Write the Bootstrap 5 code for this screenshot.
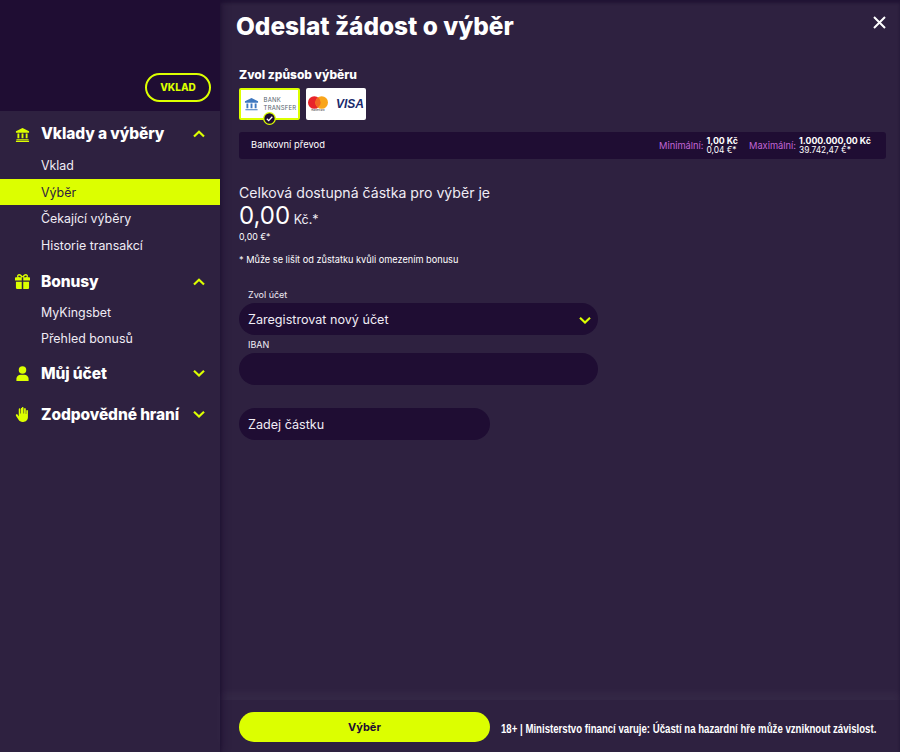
<!DOCTYPE html>
<html lang="cs">

<head>
    <meta charset="UTF-8">
    <meta name="viewport" content="width=device-width, initial-scale=1.0">
    <title>Odeslat žádost o výběr</title>
    <link href="https://cdn.jsdelivr.net/npm/bootstrap@5.3.2/dist/css/bootstrap.min.css" rel="stylesheet">
    <style>
        body {
            font-family: Inter, "Noto Sans", sans-serif;
            background-color: #2e2140;
            color: #fff;
            height: 752px;
            overflow: hidden;
        }

        .sidebar {
            width: 220px;
            flex-shrink: 0;
            box-shadow: 2px 0 8px rgba(20, 5, 40, .45);
            z-index: 1;
        }

        .side-top {
            height: 111px;
            background-color: #1f0d33;
            padding: 73px 9px 0 0;
        }

        .btn-vklad {
            width: 66px;
            height: 29px;
            padding: 0;
            font-size: 10px;
            font-weight: 800;
            color: #dcff00;
            border: 2px solid #dcff00;
            border-radius: 15px;
            line-height: 25px;
        }

        .menu-head {
            height: 22px;
            padding: 0 15px;
            font-size: 15.5px;
            font-weight: 800;
            letter-spacing: -.1px;
            margin-top: 12px;
        }

        .menu-head.tight {
            margin-top: 10px;
        }

        .menu-head.wide {
            margin-top: 19px;
        }

        .menu-icon {
            width: 15px;
            height: 15px;
            margin-right: 11px;
            fill: #dcff00;
            flex-shrink: 0;
        }

        .chev {
            width: 12px;
            height: 8px;
            fill: none;
            stroke: #dcff00;
            stroke-width: 2.2;
            flex-shrink: 0;
        }

        .menu-links {
            padding-top: 6px;
        }

        .menu-links.first {
            padding-top: 7px;
        }

        .menu-link {
            display: block;
            height: 26.7px;
            line-height: 26.7px;
            padding: 1px 0 0 41px;
            font-size: 12.4px;
            color: #f0ecf5;
        }

        .menu-link.active {
            background-color: #dcff00;
            color: #2e2140;
        }

        .main {
            width: 680px;
            min-width: 0;
            padding: 0 14px 0 19px;
            box-shadow: inset 0 3px 3px rgba(20, 5, 40, .5);
        }

        .main h1 {
            font-size: 24.4px;
            font-weight: 800;
            line-height: 28px;
            margin: 12px 0 0 -3px;
        }

        .close-x {
            position: absolute;
            top: 16px;
            right: 14px;
            width: 13px;
            height: 13px;
            stroke: #fff;
            stroke-width: 2;
        }

        .method-title {
            font-size: 12px;
            font-weight: 800;
            line-height: 16px;
            margin: 27px 0 5px;
        }

        .tiles {
            gap: 6px;
        }

        .tile {
            width: 60px;
            height: 32px;
            background-color: #fff;
            border-radius: 2px;
            color: #555f6e;
        }

        .tile.selected {
            width: 61px;
            border: 2px solid #dcff00;
        }

        .tile-check {
            position: absolute;
            left: 50%;
            bottom: -7px;
            width: 13px;
            height: 13px;
            margin-left: -6.5px;
        }

        .bank-text {
            font-size: 6px;
            line-height: 8px;
            letter-spacing: .2px;
        }

        .visa {
            font-family: "Liberation Sans", sans-serif;
            font-size: 12px;
            font-style: italic;
            font-weight: 700;
            color: #1a2a6c;
        }

        .mc-label {
            font-size: 2.5px;
            line-height: 3px;
            color: #333;
        }

        .limit-bar {
            height: 27px;
            margin-top: 12px;
            padding: 0 15px 0 12px;
            background-color: #1f0d33;
            border-radius: 3px;
            font-size: 9.4px;
        }

        .limit-label {
            font-size: 9.3px;
            color: #c265d6;
            margin-right: 3px;
        }

        .limit-val {
            line-height: 8.5px;
            font-size: 8.4px;
        }

        .limit-val b {
            display: block;
            font-weight: 700;
            font-size: 8.8px;
        }

        .limit-val.first {
            margin-right: 11px;
        }

        .avail-title {
            font-size: 14.1px;
            line-height: 20px;
            margin-top: 24px;
            color: #f0ecf5;
        }

        .avail-num {
            font-size: 24px;
            line-height: 30px;
            margin-top: -2px;
        }

        .avail-num small {
            font-size: 12.5px;
            color: #f0ecf5;
        }

        .avail-eur {
            font-size: 8.8px;
            line-height: 12px;
            margin-top: -4px;
        }

        .avail-note {
            font-size: 9.2px;
            line-height: 12px;
            margin-top: 11px;
        }

        .field-label {
            font-size: 9px;
            line-height: 12px;
            padding-left: 9px;
            color: #f0ecf5;
        }

        .field-label.first {
            margin-top: 23px;
        }

        .field-label.next {
            margin-top: 4px;
        }

        .field {
            height: 32px;
            margin-top: 2px;
            padding: 2px 7px 0 9px;
            background-color: #1f0d33;
            border-radius: 16px;
            font-size: 12.6px;
            color: #f0ecf5;
        }

        .w-form {
            width: 359px;
        }

        .w-amount {
            width: 251px;
            margin-top: 23px;
        }

        .footer-bar {
            height: 52px;
            margin: 0 -14px 0 -19px;
            padding: 12px 14px 0 19px;
            box-shadow: 0 -8px 8px rgba(255, 255, 255, .03);
        }

        .btn-submit {
            width: 251px;
            height: 30px;
            padding: 0;
            flex-shrink: 0;
            background-color: #dcff00;
            border-radius: 15px;
            font-size: 11px;
            font-weight: 700;
            color: #1f0d33;
        }

        .warning {
            font-family: "Liberation Sans", sans-serif;
            font-size: 12.2px;
            font-weight: 700;
            margin: 8px 0 0 11px;
            white-space: nowrap;
            transform: scaleX(.79);
            transform-origin: left center;
        }
    </style>
</head>

<body class="d-flex">
    <nav class="sidebar d-flex flex-column">
        <div class="side-top d-flex justify-content-end align-items-start">
            <button type="button" class="btn btn-vklad">VKLAD</button>
        </div>

        <div class="menu-head d-flex align-items-center">
            <svg class="menu-icon" viewBox="0 0 16 16"><path d="M8 1 1 4.600V6h14V4.600zM2.600 7h2v5h-2zM7 7h2v5H7zm4.400 0h2v5h-2zM1.500 13h13v1.200h-13zM1 14.700h14V16H1z"/></svg>
            <span class="flex-grow-1">Vklady a výběry</span>
            <svg class="chev" viewBox="0 0 12 8"><path d="M1 6.500 6 1.800l5 4.700"/></svg>
        </div>
        <div class="menu-links first">
            <a class="menu-link text-decoration-none" href="#">Vklad</a>
            <a class="menu-link text-decoration-none active" href="#">Výběr</a>
            <a class="menu-link text-decoration-none" href="#">Čekající výběry</a>
            <a class="menu-link text-decoration-none" href="#">Historie transakcí</a>
        </div>

        <div class="menu-head d-flex align-items-center">
            <svg class="menu-icon" viewBox="0 0 16 16"><path d="M4.500 0C3 0 2.200 1.100 2.200 2.200c0 .5.200 1 .4 1.300H.8C.4 3.500 0 3.900 0 4.300V7h7.200V3.500h1.600V7H16V4.300c0-.4-.4-.8-.8-.8h-1.800c.2-.3.400-.8.400-1.300C13.800 1.100 13 0 11.500 0 10 0 8.800 1.200 8 2.500 7.200 1.200 6 0 4.500 0zm0 1.500c.9 0 1.600.9 2.100 2H4.500a1 1 0 0 1 0-2zm7 0a1 1 0 0 1 0 2H9.400c.5-1.100 1.200-2 2.100-2zM1 8.200V15c0 .5.400 1 1 1h5.200V8.200zm7.800 0V16H14c.6 0 1-.5 1-1V8.200z"/></svg>
            <span class="flex-grow-1">Bonusy</span>
            <svg class="chev" viewBox="0 0 12 8"><path d="M1 6.500 6 1.800l5 4.700"/></svg>
        </div>
        <div class="menu-links">
            <a class="menu-link text-decoration-none" href="#">MyKingsbet</a>
            <a class="menu-link text-decoration-none" href="#">Přehled bonusů</a>
        </div>

        <div class="menu-head tight d-flex align-items-center">
            <svg class="menu-icon" viewBox="0 0 16 16"><circle cx="8" cy="4.200" r="4"/><path d="M1.500 16v-2.500C1.500 11 3.500 9.200 6 9.200h4c2.500 0 4.500 1.800 4.500 4.300V16z"/></svg>
            <span class="flex-grow-1">Můj účet</span>
            <svg class="chev" viewBox="0 0 12 8"><path d="M1 1.800 6 6.500l5-4.700"/></svg>
        </div>

        <div class="menu-head wide d-flex align-items-center">
            <svg class="menu-icon" viewBox="0 0 16 16"><path d="M7.300 1c0-.5.400-1 .9-1s.9.500.9 1v6h.6V2c0-.5.400-.9.900-.9s.9.400.9.900v5.500h.5V4c0-.5.400-.9.900-.9s.9.400.9.900v7c0 2.800-2.300 5-5 5H8c-1.800 0-3.300-.8-4.200-2.300L1 9.200c-.3-.5-.1-1.100.3-1.400.5-.3 1.100-.1 1.400.3L4 10V2.300c0-.5.400-.9.900-.9s.9.400.9.900V7h.6V1z"/></svg>
            <span class="flex-grow-1">Zodpovědné hraní</span>
            <svg class="chev" viewBox="0 0 12 8"><path d="M1 1.800 6 6.500l5-4.700"/></svg>
        </div>
    </nav>

    <main class="main d-flex flex-column position-relative">
        <h1>Odeslat žádost o výběr</h1>
        <svg class="close-x" viewBox="0 0 13 13"><path d="M1 1l11 11M12 1 1 12"/></svg>

        <div class="flex-grow-1">
            <div class="method-title">Zvol způsob výběru</div>
            <div class="tiles d-flex">
                <div class="tile selected d-flex align-items-center justify-content-center gap-1 position-relative">
                    <svg width="17" height="15" viewBox="0 0 16 16" fill="#3f78c0"><path d="M8 1 1 4.600V6h14V4.600zM2.600 7h2v5h-2zM7 7h2v5H7zm4.400 0h2v5h-2zM1.500 13h13v1.200h-13z"/></svg>
                    <div class="bank-text">BANK<br>TRANSFER</div>
                    <svg class="tile-check" viewBox="0 0 13 13"><circle cx="6.500" cy="6.500" r="5.800" fill="#1f0d33" stroke="#dcff00" stroke-width="1.300"/><path d="M3.800 6.700 5.700 8.600l3.600-3.900" fill="none" stroke="#fff" stroke-width="1.300"/></svg>
                </div>
                <div class="tile d-flex align-items-center justify-content-center gap-2">
                    <div class="text-center">
                        <svg class="d-block" width="20" height="13" viewBox="0 0 19 12"><circle cx="6" cy="6" r="6" fill="#e8232a"/><circle cx="13" cy="6" r="6" fill="#f9a51a"/><path d="M9.500 1.100a6 6 0 0 1 0 9.800 6 6 0 0 1 0-9.800z" fill="#f26522"/></svg>
                        <div class="mc-label">mastercard</div>
                    </div>
                    <span class="visa">VISA</span>
                </div>
            </div>

            <div class="limit-bar d-flex align-items-center">
                <span class="me-auto">Bankovní převod</span>
                <span class="limit-label">Minimální:</span>
                <div class="limit-val first"><b>1,00 Kč</b>0,04 €*</div>
                <span class="limit-label">Maximální:</span>
                <div class="limit-val"><b>1.000.000,00 Kč</b>39.742,47 €*</div>
            </div>

            <div class="avail-title">Celková dostupná částka pro výběr je</div>
            <div class="avail-num">0,00<small> Kč.*</small></div>
            <div class="avail-eur">0,00 €*</div>
            <div class="avail-note">* Může se lišit od zůstatku kvůli omezením bonusu</div>

            <div class="field-label first">Zvol účet</div>
            <div class="field w-form d-flex align-items-center justify-content-between">
                <span>Zaregistrovat nový účet</span>
                <svg class="chev" viewBox="0 0 12 8"><path d="M1 1.800 6 6.500l5-4.700"/></svg>
            </div>
            <div class="field-label next">IBAN</div>
            <div class="field w-form"></div>
            <div class="field w-amount d-flex align-items-center">Zadej částku</div>
        </div>

        <div class="footer-bar d-flex align-items-start">
            <button type="button" class="btn btn-submit">Výběr</button>
            <span class="warning">18+ | Ministerstvo financí varuje: Účastí na hazardní hře může vzniknout závislost.</span>
        </div>
    </main>

    <script src="https://cdn.jsdelivr.net/npm/bootstrap@5.3.2/dist/js/bootstrap.bundle.min.js"></script>
</body>

</html>
